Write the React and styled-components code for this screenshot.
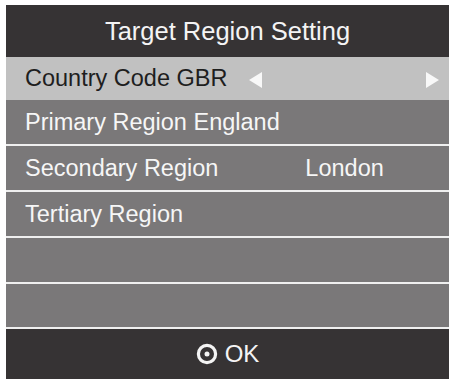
import React from "react";
import styled, { createGlobalStyle } from "styled-components";

const GlobalStyle = createGlobalStyle`
  html, body {
    margin: 0;
    padding: 0;
    background: #ffffff;
  }
  body {
    font-family: "Liberation Sans", Arial, sans-serif;
  }
`;

const Panel = styled.div`
  display: flex;
  flex-direction: column;
  width: 443px;
  margin: 5px 0 0 6px;
  background: #7a7879;
`;

const Header = styled.div`
  height: 52px;
  display: flex;
  align-items: center;
  justify-content: center;
  background: #363334;
  color: #f4f4f4;
  font-size: 25.5px;
`;

const Row = styled.div`
  height: ${(p) => p.$h}px;
  display: flex;
  align-items: center;
  padding-left: 19px;
  box-sizing: border-box;
  background: ${(p) => (p.$active ? "#c1c1c1" : "#7a7879")};
  color: ${(p) => (p.$active ? "#1e1e1e" : "#f6f6f6")};
  font-size: 23.5px;
  border-bottom: ${(p) => (p.$sep ? "2px solid #efefef" : "none")};
`;

const Value = styled.span`
  margin-left: ${(p) => p.$offset}px;
`;

const Arrow = styled.svg`
  width: 13px;
  height: 16px;
  margin-left: ${(p) => p.$offset}px;
  margin-top: 2px;
`;

const Footer = styled.div`
  height: 50px;
  display: flex;
  align-items: center;
  justify-content: center;
  gap: 7px;
  background: #363334;
  color: #f4f4f4;
  font-size: 24px;
`;

const OkIcon = () => (
  <svg width="22" height="22" viewBox="0 0 22 22">
    <circle cx="11" cy="11" r="8.6" fill="none" stroke="#f4f4f4" strokeWidth="3.2" />
    <circle cx="11" cy="11" r="2.5" fill="#f4f4f4" />
  </svg>
);

export default function App() {
  return (
    <>
      <GlobalStyle />
      <Panel>
        <Header>Target Region Setting</Header>
        <Row $active $h={43}>
          Country Code GBR
          <Arrow $offset={22} viewBox="0 0 13 16">
            <polygon points="13,0 13,16 0,8" fill="#f8f8f8" />
          </Arrow>
          <Arrow $offset={164} viewBox="0 0 13 16">
            <polygon points="0,0 0,16 13,8" fill="#f8f8f8" />
          </Arrow>
        </Row>
        <Row $h={46} $sep>Primary Region England</Row>
        <Row $h={46} $sep>
          Secondary Region
          <Value $offset={87}>London</Value>
        </Row>
        <Row $h={46} $sep>Tertiary Region</Row>
        <Row $h={46} $sep />
        <Row $h={45} $sep />
        <Footer>
          <OkIcon />
          OK
        </Footer>
      </Panel>
    </>
  );
}
